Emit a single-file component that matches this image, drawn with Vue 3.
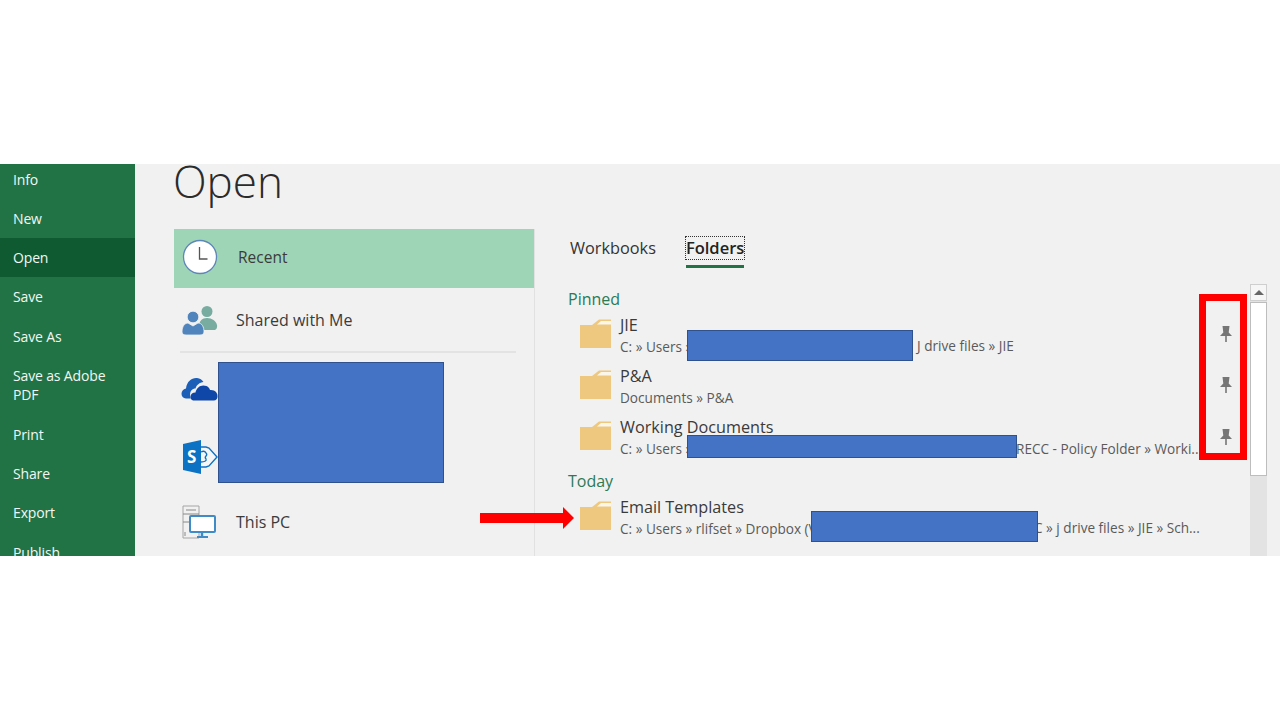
<script setup>
const navItems = [
  { label: 'Info' },
  { label: 'New' },
  { label: 'Open', active: true },
  { label: 'Save' },
  { label: 'Save As' },
  { label: 'Save as Adobe PDF', tall: true },
  { label: 'Print' },
  { label: 'Share' },
  { label: 'Export' },
  { label: 'Publish' },
]
const groups = [
  {
    title: 'Pinned',
    pinned: true,
    items: [
      { name: 'JIE', path: 'C: » Users »', tail: 'J drive files » JIE', tailX: 349 },
      { name: 'P&A', path: 'Documents » P&A' },
      { name: 'Working Documents', path: 'C: » Users »', tail: 'RECC - Policy Folder » Worki...', tailX: 448 },
    ],
  },
  {
    title: 'Today',
    items: [
      { name: 'Email Templates', path: 'C: » Users » rlifset » Dropbox (V', tail: 'C » j drive files » JIE » Sch...', tailX: 466 },
    ],
  },
  { title: 'Yesterday', items: [] },
]
</script>

<template>
  <div class="page">
    <div class="stage">
      <nav class="nav">
        <div
          v-for="item in navItems"
          :key="item.label"
          class="nav-item"
          :class="{ active: item.active, tall: item.tall }"
        >{{ item.label }}</div>
      </nav>

      <main class="main">
        <h1 class="title">Open</h1>
        <div class="columns">
          <section class="places">
            <div class="place recent">
              <svg class="clock" width="36" height="36" viewBox="0 0 36 36">
                <circle cx="18" cy="18" r="16.5" fill="#fff" stroke="#5f86b8" stroke-width="1.3" />
                <path d="M17.5 8v12h8" fill="none" stroke="#555" stroke-width="1.3" />
              </svg>
              <span>Recent</span>
            </div>
            <div class="place shared">
              <svg width="36" height="30" viewBox="0 0 36 30">
                <circle cx="25" cy="6.5" r="5.5" fill="#78aca0" />
                <path d="M17 22c0-6 3-9 8-9s9 3 10 7c.5 3-1 5-3 5H20z" fill="#78aca0" />
                <circle cx="11" cy="12" r="5.8" fill="#4f84bd" stroke="#f1f1f1" stroke-width=".8" />
                <path d="M0 27c0-6 3-9 6-9l5 3 5-3c4 0 6 4 6 9 0 2-2 3-4 3H4c-2 0-4-1-4-3z" fill="#4f84bd" stroke="#f1f1f1" stroke-width=".8" />
              </svg>
              <span>Shared with Me</span>
            </div>
            <div class="rule"></div>
            <div class="cloud-row">
              <svg width="37" height="24" viewBox="0 0 37 24">
                <path d="M5 21.5C-1 21 -1 12.5 5 11.5 6 4 11 .5 16 1c3 .3 5 2 6.5 4-4 .5-7 3-8 6.5-4 0-6.500 3.500-5 10z" fill="#1c5fb8" />
                <path d="M12 23.500c-4-1-3.500-8 2.500-8 1-5.500 6-8.500 11-6.500 2 1 3 2 3.500 4 5-.5 8 3 7.500 7-.3 2-1.500 3.500-3.500 3.500z" fill="#0f47a8" />
              </svg>
            </div>
            <div class="sp-row">
              <svg width="36" height="36" viewBox="0 0 36 36">
                <path d="M19 8h5l3 1 8 9-8 9-3 1h-5" fill="#f6f6f6" stroke="#0b72c4" stroke-width="1.4" />
                <path d="M19 13c2-1 4-1 5 1 1 1 1 2 0 3-1 1-1 2 0 3 1 2-2 3-5 3" fill="none" stroke="#0b72c4" stroke-width="1.3" />
                <path d="M1 5 19 1v34L1 31z" fill="#0b72c4" />
                <text x="5" y="24" class="sp-letter">S</text>
              </svg>
            </div>
            <div class="place pc">
              <svg width="36" height="34" viewBox="0 0 36 34">
                <path d="M1 1h16v32H1z" fill="#f1f1f1" stroke="#a5a5a5" />
                <path d="M4 5h10M1 9h16M1 17h6M3 27v4" stroke="#888" fill="none" />
                <rect x="8" y="11" width="25" height="16" rx="1" fill="#fff" stroke="#3f8bc6" stroke-width="2" />
                <path d="M20 27v4" stroke="#3f8bc6" stroke-width="2.400" />
                <path d="M15 32h11" stroke="#3f8bc6" stroke-width="2" />
              </svg>
              <span>This PC</span>
            </div>
          </section>

          <section class="recent-list">
            <div class="tabs">
              <span class="tab">Workbooks</span>
              <span class="tab selected"><b>Folders</b></span>
            </div>
            <div v-for="group in groups" :key="group.title" class="group">
              <h2 class="group-title">{{ group.title }}</h2>
              <div v-for="item in group.items" :key="item.name" class="folder">
                <svg class="folder-icon" width="31" height="29" viewBox="0 0 31 29">
                  <path d="M0 6H12L19 .5H31V29H0z" fill="#efc87f" />
                  <path d="M17 5.500 21 2H31V5.500z" fill="#fbf6ea" />
                </svg>
                <div class="folder-text">
                  <div class="folder-name">{{ item.name }}</div>
                  <div class="folder-path">
                    {{ item.path }}
                    <span v-if="item.tail" class="tail" :style="{ left: item.tailX + 'px' }">{{ item.tail }}</span>
                  </div>
                </div>
                <svg v-if="group.pinned" class="pin" width="12" height="16" viewBox="0 0 12 16">
                  <path d="M2.500 0h7l-.8 6.500L12 10H0l3.300-3.500zM5.200 10h1.600v6H5.200z" fill="#767676" />
                </svg>
              </div>
            </div>
            <div class="scrollbar">
              <div class="scroll-up"></div>
              <div class="scroll-thumb"></div>
            </div>
          </section>
        </div>
      </main>

      <div class="cover c1"></div>
      <div class="cover c2"></div>
      <div class="cover c3"></div>
      <div class="cover c4"></div>
      <div class="pin-box"></div>
      <div class="arrow"></div>
    </div>
  </div>
</template>

<style>
html, body { margin: 0; background: #fff; }
</style>

<style scoped>
.page {
  width: 1280px;
  height: 720px;
  padding-top: 164px;
  box-sizing: border-box;
  background: #fff;
  font-family: "Open Sans", "Noto Sans", sans-serif;
  overflow: hidden;
}
.stage {
  position: relative;
  display: flex;
  height: 392px;
  overflow: hidden;
  background: #f1f1f1;
}
.nav {
  width: 135px;
  flex: none;
  margin-top: -4.6px;
  background: #217346;
  color: #f2f7f4;
  font-size: 14px;
  letter-spacing: -.15px;
}
.nav-item {
  display: flex;
  align-items: center;
  height: 39.3px;
  padding-left: 13px;
}
.nav-item.active { background: #0f5a30; }
.nav-item.tall {
  height: 58.6px;
  line-height: 19px;
  padding-right: 25px;
}
.main {
  flex: 1;
  padding-left: 39px;
  min-width: 0;
}
.title {
  margin: -10px 0 0 -1px;
  height: 75px;
  font-size: 44px;
  line-height: 54px;
  font-weight: 300;
  color: #2b2b2b;
}
.columns { display: flex; }
.places {
  width: 360px;
  flex: none;
  border-right: 1px solid #e1e1e1;
  min-height: 340px;
}
.place {
  display: flex;
  align-items: center;
  color: #3b3b3b;
  font-size: 16px;
}
.recent {
  height: 59px;
  padding: 0 0 3px 8px;
  box-sizing: border-box;
  background: #9fd5b7;
  gap: 20px;
  font-size: 15.5px;
}
.shared {
  height: 63px;
  padding-left: 8px;
  gap: 18px;
}
.rule {
  height: 2px;
  margin: 0 18px 0 6px;
  background: #e3e3e3;
}
.cloud-row {
  height: 72px;
  padding-left: 7px;
  display: flex;
  align-items: center;
}
.sp-row {
  height: 64px;
  padding-left: 8px;
  display: flex;
  align-items: center;
}
.sp-letter {
  font-size: 17px;
  font-weight: 700;
  fill: #fff;
  font-family: "Open Sans", sans-serif;
}
.pc {
  height: 66px;
  padding-left: 8px;
  gap: 18px;
}
.recent-list {
  position: relative;
  flex: 1;
  padding-left: 33px;
  min-width: 0;
}
.tabs {
  display: flex;
  gap: 30px;
  padding: 8px 0 0 2px;
  height: 48px;
  box-sizing: border-box;
  color: #333;
  font-size: 16.3px;
  align-items: flex-start;
}
.tab { line-height: 22px; }
.tab.selected {
  position: relative;
  outline: 1px dotted #333;
  outline-offset: 0;
  color: #222;
  font-size: 16.5px;
  height: 22px;
}
.tab.selected b { font-weight: 600; }
.tab.selected::after {
  content: "";
  position: absolute;
  left: 0;
  right: 0;
  top: 28px;
  height: 3px;
  background: #217346;
}
.group-title {
  margin: 0;
  font-size: 16px;
  font-weight: 400;
  color: #2c7a54;
  line-height: 22px;
  padding-top: 11px;
  height: 22px;
}
.group:nth-of-type(3) .group-title { padding-top: 6px; }
.group:nth-of-type(4) .group-title { padding-top: 8px; }
.folder {
  position: relative;
  display: flex;
  align-items: center;
  height: 51.4px;
  padding-left: 12px;
  gap: 9px;
}
.group:nth-of-type(3) .folder { height: 51px; }
.folder-icon { flex: none; margin-top: -5px; }
.folder-name {
  font-size: 16.2px;
  line-height: 22px;
  color: #3a3a3a;
}
.folder-path {
  font-size: 13.6px;
  line-height: 22px;
  color: #5a5a5a;
  white-space: nowrap;
}
.tail { position: absolute; top: 25px; white-space: nowrap; }
.pin { position: absolute; left: 652px; top: 16px; }
.scrollbar {
  position: absolute;
  left: 715px;
  top: 55px;
  width: 17px;
  height: 300px;
  background: #e3e3e3;
}
.scroll-up {
  height: 17px;
  box-sizing: border-box;
  border: 1px solid #cfcfcf;
  background: #f6f6f6;
  position: relative;
}
.scroll-up::after {
  content: "";
  position: absolute;
  left: 3px;
  top: 5px;
  border-left: 5px solid transparent;
  border-right: 5px solid transparent;
  border-bottom: 5px solid #666;
}
.scroll-thumb {
  margin-top: 1px;
  height: 174px;
  box-sizing: border-box;
  background: #fff;
  border: 1px solid #bdbdbd;
}
.cover {
  position: absolute;
  background: #4472c4;
  border: 1px solid #2f528f;
  box-sizing: border-box;
}
.c1 { left: 218px; top: 198px; width: 226px; height: 121px; }
.c2 { left: 687px; top: 166px; width: 226px; height: 31px; }
.c3 { left: 687px; top: 271px; width: 330px; height: 23px; }
.c4 { left: 811px; top: 347px; width: 227px; height: 31px; }
.pin-box {
  position: absolute;
  left: 1199px;
  top: 130px;
  width: 48px;
  height: 166px;
  box-sizing: border-box;
  border: 7px solid #f00;
}
.arrow {
  position: absolute;
  left: 480px;
  top: 349px;
  width: 83px;
  height: 10px;
  background: #f00;
}
.arrow::after {
  content: "";
  position: absolute;
  left: 83px;
  top: -6px;
  border-top: 11px solid transparent;
  border-bottom: 11px solid transparent;
  border-left: 11px solid #f00;
}
</style>
